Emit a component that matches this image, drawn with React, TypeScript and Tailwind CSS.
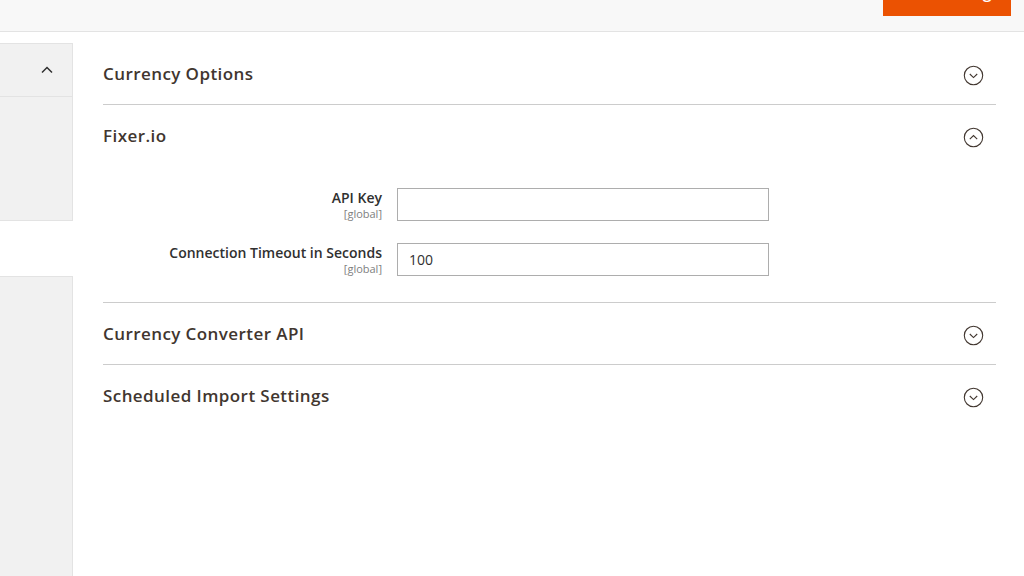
import React from "react";

const font = { fontFamily: '"Open Sans", "Liberation Sans", sans-serif' };

function CircleChevron({ up }: { up?: boolean }) {
  return (
    <svg width="21" height="21" viewBox="0 0 21 21" fill="none" className="mt-[3px]">
      <circle cx="10.5" cy="10.5" r="9.2" stroke="#41362f" strokeWidth="1.1" />
      {up ? (
        <path d="M6.8 12.2 L10.5 8.6 L14.2 12.2" stroke="#41362f" strokeWidth="1.1" fill="none" />
      ) : (
        <path d="M6.8 9 L10.5 12.6 L14.2 9" stroke="#41362f" strokeWidth="1.1" fill="none" />
      )}
    </svg>
  );
}

function SectionHeader({ title, open }: { title: string; open?: boolean }) {
  return (
    <div className="flex h-[61px] items-center justify-between pr-[12px]">
      <span className="text-[17px] font-semibold tracking-[0.025em] text-[#41362f]">{title}</span>
      <CircleChevron up={open} />
    </div>
  );
}

function Field({ label, value }: { label: string; value?: string }) {
  return (
    <div className="flex h-[33px] items-start">
      <div className="flex h-[33px] w-[382px] flex-col items-end pt-[1px]">
        <span className="whitespace-nowrap text-[14px] font-semibold leading-[18px] text-[#303030]">{label}</span>
        <span className="text-[11px] leading-[14px] text-[#808080]">[global]</span>
      </div>
      <div className="ml-[15px] flex h-[33px] w-[372px] items-center border border-[#adadad] bg-white px-[11px] text-[14px] text-[#303030]">
        {value}
      </div>
    </div>
  );
}

export default function App() {
  return (
    <div className="h-[576px] w-[1024px] overflow-hidden bg-white" style={font}>
      <header className="flex h-[32px] justify-end border-b border-[#e3e3e3] bg-[#f8f8f8] pr-[13px]">
        <div className="-mt-[30px] flex h-[46px] w-[128px] items-center justify-center bg-[#eb5202] pb-[3px] text-[16px] font-semibold text-white">
          Save Config
        </div>
      </header>
      <div className="flex pt-[11px]">
        <aside className="flex w-[73px] shrink-0 flex-col">
          <div className="border-y border-r border-[#e3e3e3] bg-[#f1f1f1]">
            <div className="flex h-[53px] items-center justify-end border-b border-[#e3e3e3] pr-[19px]">
              <svg width="12" height="8" viewBox="0 0 12 8" fill="none">
                <path d="M1 6.5 L6 1.5 L11 6.5" stroke="#303030" strokeWidth="1.5" fill="none" />
              </svg>
            </div>
            <div className="h-[123px]" />
          </div>
          <div className="h-[55px]" />
          <div className="h-[400px] border-t border-r border-[#e3e3e3] bg-[#f1f1f1]" />
        </aside>
        <main className="ml-[30px] w-[893px]">
          <SectionHeader title="Currency Options" />
          <div className="border-t border-[#cccccc]">
            <SectionHeader title="Fixer.io" open />
            <div className="-ml-[103px] flex flex-col gap-[22px] pt-[22px] pb-[26px]">
              <Field label="API Key" />
              <Field label="Connection Timeout in Seconds" value="100" />
            </div>
          </div>
          <div className="border-t border-[#cccccc]">
            <SectionHeader title="Currency Converter API" />
          </div>
          <div className="border-t border-[#cccccc]">
            <SectionHeader title="Scheduled Import Settings" />
          </div>
        </main>
      </div>
    </div>
  );
}
